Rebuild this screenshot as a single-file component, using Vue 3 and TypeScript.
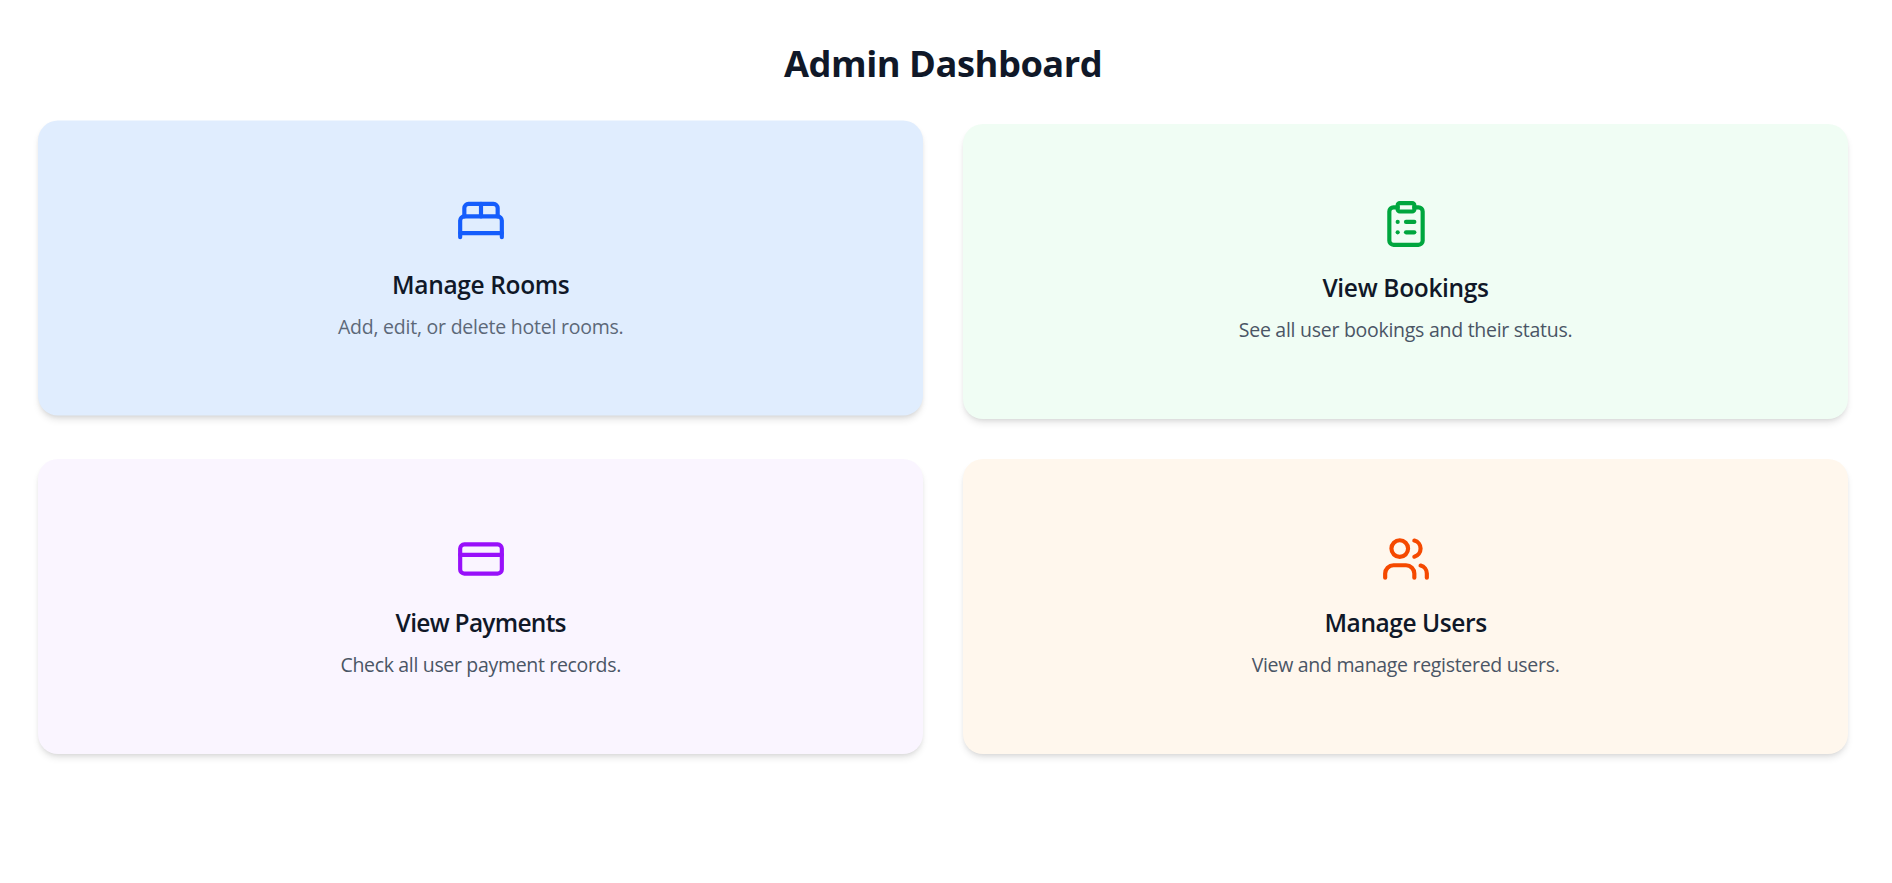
<script setup lang="ts">
interface Card {
  id: string
  title: string
  text: string
  paths: string[]
}

const cards: Card[] = [
  {
    id: 'rooms',
    title: 'Manage Rooms',
    text: 'Add, edit, or delete hotel rooms.',
    paths: [
      'M2 20v-8a2 2 0 0 1 2-2h16a2 2 0 0 1 2 2v8',
      'M4 10V6a2 2 0 0 1 2-2h12a2 2 0 0 1 2 2v4',
      'M12 4v6',
      'M2 18h20',
    ],
  },
  {
    id: 'bookings',
    title: 'View Bookings',
    text: 'See all user bookings and their status.',
    paths: [
      'M9 2h6a1 1 0 0 1 1 1v2a1 1 0 0 1-1 1H9a1 1 0 0 1-1-1V3a1 1 0 0 1 1-1z',
      'M16 4h2a2 2 0 0 1 2 2v14a2 2 0 0 1-2 2H6a2 2 0 0 1-2-2V6a2 2 0 0 1 2-2h2',
      'M12 11h4',
      'M12 16h4',
      'M8 11h.01',
      'M8 16h.01',
    ],
  },
  {
    id: 'payments',
    title: 'View Payments',
    text: 'Check all user payment records.',
    paths: [
      'M4 5h16a2 2 0 0 1 2 2v10a2 2 0 0 1-2 2H4a2 2 0 0 1-2-2V7a2 2 0 0 1 2-2z',
      'M2 10h20',
    ],
  },
  {
    id: 'users',
    title: 'Manage Users',
    text: 'View and manage registered users.',
    paths: [
      'M16 21v-2a4 4 0 0 0-4-4H6a4 4 0 0 0-4 4v2',
      'M16 3.128a4 4 0 0 1 0 7.744',
      'M22 21v-2a4 4 0 0 0-3-3.87',
      'M13 7a4 4 0 1 1-8 0a4 4 0 1 1 8 0z',
    ],
  },
]
</script>

<template>
  <main class="page">
    <h1>Admin Dashboard</h1>
    <div class="grid">
      <section v-for="card in cards" :key="card.id" class="card" :class="card.id">
        <svg class="icon" viewBox="0 0 24 24" aria-hidden="true">
          <path v-for="d in card.paths" :key="d" :d="d" />
        </svg>
        <h2>{{ card.title }}</h2>
        <p>{{ card.text }}</p>
      </section>
    </div>
  </main>
</template>

<style>
body {
  background: #fff;
}
</style>

<style scoped>
.page {
  box-sizing: border-box;
  min-height: 100vh;
  padding: 41px 44px 40px 38.3px;
  font-family: "Open Sans", "Noto Sans", sans-serif;
  text-align: center;
}

h1 {
  margin: 0 0 38.2px;
  font-size: 36.3px;
  line-height: 45px;
  font-weight: 700;
  letter-spacing: -0.48px;
  color: #101828;
}

.grid {
  display: grid;
  grid-template-columns: 1fr 1fr;
  gap: 40px;
}

.card {
  box-sizing: border-box;
  display: flex;
  flex-direction: column;
  align-items: center;
  height: 295px;
  padding-top: 75px;
  border-radius: 20px;
  box-shadow: 0 5px 7.5px -1px rgba(0, 0, 0, 0.1), 0 2.5px 5px -2.5px rgba(0, 0, 0, 0.1);
}

.icon {
  flex: none;
  width: 50px;
  height: 50px;
  margin-bottom: 21px;
  fill: none;
  stroke: currentColor;
  stroke-width: 2;
  stroke-linecap: round;
  stroke-linejoin: round;
}

h2 {
  margin: 0 0 10px;
  font-size: 24.5px;
  line-height: 35px;
  font-weight: 600;
  color: #101828;
}

p {
  margin: 0;
  font-size: 19.5px;
  line-height: 30px;
  color: #4a5565;
}

.rooms {
  background: #e0edfe;
  color: #155dfc;
  transform: translateY(-3.4px);
}

.rooms h2 {
  letter-spacing: -0.35px;
}

.rooms p {
  letter-spacing: -0.228px;
  color: #5c6878;
}

.bookings {
  background: #f0fdf4;
  color: #00a63e;
}

.bookings h2 {
  letter-spacing: -0.326px;
}

.bookings p {
  letter-spacing: -0.271px;
}

.payments {
  background: #faf5ff;
  color: #9810fa;
}

.payments h2 {
  letter-spacing: -0.724px;
}

.payments p {
  letter-spacing: -0.327px;
}

.users {
  background: #fff7ed;
  color: #f54900;
}

.users h2 {
  letter-spacing: -0.43px;
}

.users p {
  letter-spacing: -0.305px;
}
</style>
